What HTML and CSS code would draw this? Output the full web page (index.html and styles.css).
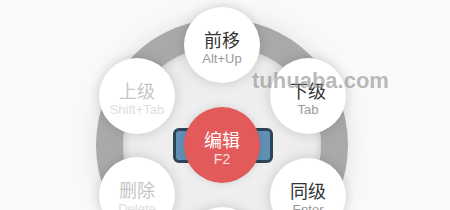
FILE: index.html
```html
<!DOCTYPE html>
<html lang="zh">
<head>
<meta charset="utf-8">
<title>Radial menu</title>
<link rel="stylesheet" href="styles.css">
</head>
<body>
<div class="stage">
  <div class="ring"></div>
  <div class="bar"></div>
  <div class="node n-top"><span class="t">前移</span><span class="s">Alt+Up</span></div>
  <div class="node n-ul off"><span class="t">上级</span><span class="s">Shift+Tab</span></div>
  <div class="node n-ur"><span class="t">下级</span><span class="s">Tab</span></div>
  <div class="node n-ll off"><span class="t">删除</span><span class="s">Delete</span></div>
  <div class="node n-lr"><span class="t">同级</span><span class="s">Enter</span></div>
  <div class="node n-bot"><span class="t">后移</span><span class="s">Alt+Down</span></div>
  <div class="node n-center"><span class="t">编辑</span><span class="s">F2</span></div>
  <div class="mark">tuhuaba.com</div>
</div>
</body>
</html>
```
FILE: styles.css
```css
html, body {
  margin: 0;
  padding: 0;
  background: #f8f8f8;
}
.stage {
  position: relative;
  width: 450px;
  height: 210px;
  overflow: hidden;
  background: #f9f9f9;
}
.ring {
  position: absolute;
  left: 96px;
  top: 19px;
  width: 252px;
  height: 252px;
  box-sizing: border-box;
  border-radius: 50%;
  border: 27px solid #a9a9a9;
  background: radial-gradient(circle, #f2f2f2 0%, #ebebeb 70%, #e2e2e2 100%);
  box-shadow: 0 0 24px rgba(0,0,0,0.10), inset 0 0 8px rgba(0,0,0,0.18);
}
.bar {
  position: absolute;
  left: 173px;
  top: 128px;
  width: 100px;
  height: 35px;
  box-sizing: border-box;
  border: 3px solid #2c4557;
  border-radius: 6px;
  background: #6291b7;
}
.node {
  position: absolute;
  width: 76px;
  height: 76px;
  border-radius: 50%;
  background: #fff;
  box-shadow: 0 0 12px rgba(0,0,0,0.16);
  display: flex;
  flex-direction: column;
  align-items: center;
  box-sizing: border-box;
  padding-top: 21px;
}
.node .t {
  font-family: "Noto Sans CJK SC", "Noto Sans", sans-serif;
  font-size: 18px;
  line-height: 22px;
  color: #333;
}
.node .s {
  font-family: "Liberation Sans", Arial, sans-serif;
  font-size: 13px;
  line-height: 16px;
  margin-top: 1px;
  color: #9a9a9a;
}
.node.off .t { color: #c6c6c6; }
.node.off .s { color: #dedede; }
.n-top { left: 184px; top: 7px; }
.n-ul { left: 99px; top: 58px; }
.n-ur { left: 270px; top: 58px; }
.n-ll { left: 99px; top: 157px; }
.n-lr { left: 270px; top: 158px; }
.n-bot { left: 184px; top: 207px; }
.n-center {
  left: 184px;
  top: 107px;
  background: #e35a5a;
  box-shadow: 0 0 10px rgba(0,0,0,0.12);
}
.n-center .t { color: #fff; }
.n-center .s { color: #fbe0e0; font-size: 14px; }
.mark {
  position: absolute;
  left: 252px;
  top: 68px;
  font-family: "Liberation Sans", Arial, sans-serif;
  font-weight: bold;
  font-size: 22px;
  line-height: 26px;
  color: rgba(140,140,140,0.6);
}
```
